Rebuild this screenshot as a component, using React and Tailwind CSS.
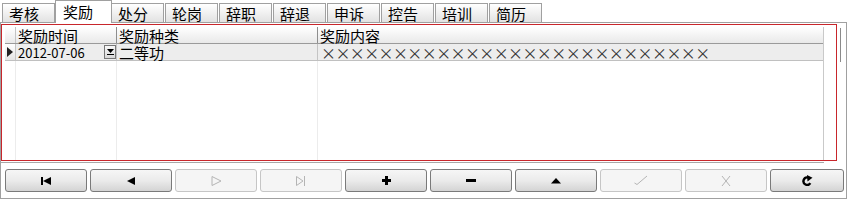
const tabs = ["考核", "奖励", "处分", "轮岗", "辞职", "辞退", "申诉", "控告", "培训", "简历"];

function Icon({ kind }) {
  const dis = "#b4b4b4";
  switch (kind) {
    case "first":
      return (
        <svg width="11" height="8" viewBox="0 0 11 8">
          <rect x="0" y="0" width="2" height="8" fill="#000" />
          <polygon points="2,4 10,0 10,8" fill="#000" />
        </svg>
      );
    case "prev":
      return (
        <svg width="9" height="8" viewBox="0 0 9 8">
          <polygon points="0,4 8,0 8,8" fill="#000" />
        </svg>
      );
    case "next":
      return (
        <svg width="11" height="10" viewBox="0 0 11 10">
          <polygon points="1,0.5 10,5 1,9.5" fill="none" stroke={dis} strokeWidth="1" />
        </svg>
      );
    case "last":
      return (
        <svg width="11" height="10" viewBox="0 0 11 10">
          <polygon points="0.5,0.5 7,5 0.5,9.5" fill="none" stroke={dis} strokeWidth="1" />
          <rect x="8" y="0" width="1" height="10" fill={dis} />
        </svg>
      );
    case "add":
      return (
        <svg width="9" height="9" viewBox="0 0 9 9">
          <rect x="3" y="0" width="3" height="9" fill="#000" />
          <rect x="0" y="3" width="9" height="3" fill="#000" />
        </svg>
      );
    case "del":
      return (
        <svg width="10" height="3" viewBox="0 0 10 3">
          <rect x="0" y="0" width="10" height="3" fill="#000" />
        </svg>
      );
    case "up":
      return (
        <svg width="10" height="6" viewBox="0 0 10 6">
          <polygon points="5,0 10,5.5 0,5.5" fill="#000" />
        </svg>
      );
    case "ok":
      return (
        <svg width="14" height="11" viewBox="0 0 14 11">
          <polyline points="0.5,8 3,9.5 13,1" fill="none" stroke={dis} strokeWidth="1" />
        </svg>
      );
    case "cancel":
      return (
        <svg width="12" height="12" viewBox="0 0 12 12">
          <path d="M2 1 L10 11 M10 1 L2 11" fill="none" stroke={dis} strokeWidth="1" />
        </svg>
      );
    case "refresh":
      return (
        <svg width="11" height="11" viewBox="0 0 11 11">
          <path d="M8.3 8.2 A3.7 3.7 0 1 1 6.2 2.6" fill="none" stroke="#000" strokeWidth="2.4" />
          <polygon points="5,0 10.5,2.8 5.5,6.5" fill="#000" />
        </svg>
      );
    default:
      return null;
  }
}

const buttons = [
  { k: "first", on: true },
  { k: "prev", on: true },
  { k: "next", on: false },
  { k: "last", on: false },
  { k: "add", on: true },
  { k: "del", on: true },
  { k: "up", on: true },
  { k: "ok", on: false },
  { k: "cancel", on: false },
  { k: "refresh", on: true },
];

export default function App() {
  const crosses = Array.from({ length: 27 });
  return (
    <div className="w-[850px] h-[200px] bg-white overflow-hidden font-['Noto_Sans_CJK_SC',sans-serif] text-black">
      {/* tabs */}
      <div className="relative z-10 flex h-[22px] items-end pl-[2px]">
        {tabs.map((t, i) =>
          i === 1 ? (
            <div
              key={t}
              className="-mx-[1px] h-[23px] -mb-[1px] w-[57px] border border-b-0 border-[#a0a0a0] bg-white pl-[7px] pt-[3px] text-[15px] leading-[15px]"
            >
              {t}
            </div>
          ) : (
            <div
              key={t}
              className="mr-[1px] h-[19px] w-[53px] border border-b-0 border-[#a0a0a0] bg-gradient-to-b from-[#ffffff] to-[#e2e2e2] pl-[6px] pt-[2px] text-[15px] leading-[15px]"
            >
              {t}
            </div>
          )
        )}
      </div>

      {/* panel */}
      <div className="flex h-[177px] w-[847px] flex-col border border-[#a0a0a0]">
        <div className="flex">
          {/* red frame */}
          <div className="mt-[1px] h-[137px] w-[836px] overflow-hidden border border-[#c8262b]">
            <div className="ml-[3px] mt-[2px] flex h-[140px] w-[819px] flex-col border-r border-[#c9c9c9]">
              {/* header */}
              <div className="flex h-[17px] border-b border-[#9a9a9a] bg-gradient-to-b from-[#ffffff] to-[#e9e9e9] text-[15px] leading-[15px]">
                <div className="w-[11px] border-r border-[#c4c4c4]" />
                <div className="w-[101px] border-r border-[#8e8e8e] pl-[2px] pt-[1px]">奖励时间</div>
                <div className="w-[201px] border-r border-[#8e8e8e] pl-[2px] pt-[1px]">奖励种类</div>
                <div className="flex-1 pl-[2px] pt-[1px]">奖励内容</div>
              </div>
              {/* data row */}
              <div className="flex h-[17px] border-b border-[#c0c0c0] bg-[#ededed] text-[15px] leading-[15px]">
                <div className="flex w-[11px] items-center border-r border-[#c4c4c4] bg-gradient-to-b from-[#ffffff] to-[#e4e4e4] pl-[2px]">
                  <svg width="6" height="10" viewBox="0 0 6 10">
                    <polygon points="0,0 6,5 0,10" fill="#222" />
                  </svg>
                </div>
                <div className="flex w-[101px] items-center border-r border-[#c4c4c4] pl-[2px]">
                  <span className="flex-1 text-[13px] leading-[13px]">2012-07-06</span>
                  <div className="flex h-[14px] w-[12px] flex-col items-center justify-center border border-[#777] bg-gradient-to-b from-[#f8f8f8] to-[#d8d8d8]">
                    <svg width="7" height="6" viewBox="0 0 7 6">
                      <polygon points="0,0 7,0 3.5,4" fill="#000" />
                      <rect x="0" y="5" width="7" height="1" fill="#000" />
                    </svg>
                  </div>
                </div>
                <div className="w-[201px] border-r border-[#c4c4c4] pl-[2px] pt-[1px]">二等功</div>
                <div className="flex flex-1 pl-[3px] pt-[1px] text-[#333]">
                  {crosses.map((_, i) => (
                    <span key={i} className="inline-block w-[14.4px] text-center">×</span>
                  ))}
                </div>
              </div>
              {/* empty area */}
              <div className="flex flex-1">
                <div className="w-[11px] border-r border-[#ececec]" />
                <div className="w-[101px] border-r border-[#ececec]" />
                <div className="w-[201px] border-r border-[#ececec]" />
                <div className="flex-1" />
              </div>
            </div>
          </div>
          <div className="ml-[3px] mt-[5px] h-[34px] w-[1px] bg-[#8a8a8a]" />
        </div>
        <div className="mt-[1px] h-[1px] w-[823px] bg-[#a8a8a8]" />
        {/* buttons */}
        <div className="ml-[4px] mt-[6px] flex gap-[3px]">
          {buttons.map((b, i) => (
            <div
              key={b.k}
              className={
                (i === 9 ? "w-[74px] " : "w-[82px] ") +
                "flex h-[23px] items-center justify-center rounded-[3px] border " +
                (b.on
                  ? "border-[#7a7a7a] bg-gradient-to-b from-[#f6f6f6] via-[#ebebeb] to-[#d4d4d4]"
                  : "border-[#c6c6c6] bg-[#f5f5f5]")
              }
            >
              <Icon kind={b.k} />
            </div>
          ))}
        </div>
      </div>
    </div>
  );
}
